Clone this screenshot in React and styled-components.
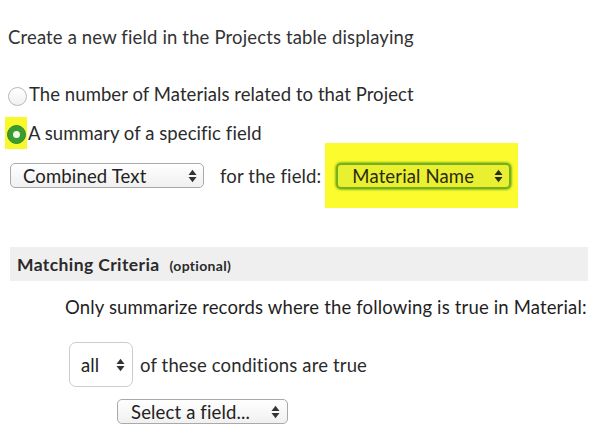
import React from 'react';
import styled, { createGlobalStyle } from 'styled-components';

const GlobalStyle = createGlobalStyle`
  html, body {
    margin: 0;
    padding: 0;
    background: #ffffff;
  }
  body {
    font-family: Lato, "Open Sans", "Liberation Sans", sans-serif;
    color: #333333;
    letter-spacing: 0.15px;
  }
`;

const Page = styled.div`
  width: 600px;
  height: 438px;
  overflow: hidden;
  box-sizing: border-box;
  padding: 26px 12px 0 8px;
`;

const Heading = styled.p`
  margin: 0;
  font-size: 18.5px;
  line-height: 22px;
  color: #333333;
`;

const RadioList = styled.div`
  margin-top: 35px;
  display: flex;
  flex-direction: column;
  gap: 17px;
`;

const RadioRow = styled.label`
  display: flex;
  align-items: center;
  height: 22px;
  font-size: 18.5px;
  line-height: 22px;
  letter-spacing: 0.07px;
  color: #2b2b2b;
`;

const Radio = styled.span`
  width: 19px;
  height: 19px;
  box-sizing: border-box;
  border-radius: 50%;
  flex: none;
  display: flex;
  align-items: center;
  justify-content: center;
  margin-top: ${(p) => (p.$checked ? '0' : '4px')};
  margin-right: 2px;
  border: 1px solid ${(p) => (p.$checked ? '#2f8a2c' : '#b8b8b8')};
  background: ${(p) =>
    p.$checked ? '#3a9b34' : 'linear-gradient(#ffffff, #f1f1f1)'};

  &::after {
    content: '';
    display: ${(p) => (p.$checked ? 'block' : 'none')};
    width: 7px;
    height: 7px;
    border-radius: 50%;
    background: #f4f8d8;
  }
`;

const Highlight = styled.span`
  display: flex;
  flex: none;
  padding: 8px 1px 5px 2px;
  margin-left: -3px;
  margin-right: 1px;
  background: #f8f82a;
  & > span {
    margin-right: 0;
  }
`;

const SelectRow = styled.div`
  display: flex;
  align-items: center;
  height: 25px;
  margin-top: 19px;
  margin-left: 2px;
  font-size: 18.5px;
  color: #2b2b2b;
`;

const Select = styled.div`
  display: flex;
  align-items: center;
  justify-content: space-between;
  box-sizing: border-box;
  flex: none;
  width: ${(p) => p.$width}px;
  height: ${(p) => p.$height || 25}px;
  padding: 0 ${(p) => p.$padRight || 6}px 0 ${(p) => p.$padLeft || 12}px;
  border: 1px solid #a9a9a9;
  border-radius: 5px;
  background: linear-gradient(#ffffff, #f0f0f0);
  font-size: 18.5px;
  line-height: 22px;
  color: #222222;
`;

const PlainSelect = styled(Select)`
  border-color: #cccccc;
  border-radius: 7px;
  background: #ffffff;
`;

const GreenSelect = styled(Select)`
  border: 2px solid #78b01c;
  box-shadow: 0 0 2px 1px #8fbf22;
  background: #e9ef31;
  color: #2b2b12;
`;

const YellowBox = styled.div`
  flex: none;
  margin: -20px 0 -19px 4px;
  padding: 20px 7px 19px 11px;
  background: #fbfb2d;
`;

const FieldLabel = styled.span`
  margin-left: 16px;
`;

const Section = styled.div`
  margin-top: 59px;
  margin-left: 2px;
  width: 578px;
  height: 34px;
  box-sizing: border-box;
  padding-left: 7px;
  display: flex;
  align-items: center;
  background: #efefef;
  color: #2a2a2a;
`;

const SectionTitle = styled.span`
  font-size: 17.5px;
  font-weight: 700;
  letter-spacing: 0.4px;
`;

const SectionNote = styled.span`
  font-size: 14px;
  font-weight: 700;
  letter-spacing: 0.3px;
  margin-left: 10px;
  margin-top: 2px;
`;

const Summary = styled.p`
  margin: 15px 0 0 57px;
  font-size: 18.5px;
  line-height: 22px;
  color: #1f1f1f;
`;

const ConditionRow = styled.div`
  display: flex;
  align-items: center;
  margin-top: 24px;
  margin-left: 61px;
  font-size: 18.5px;
  color: #2b2b2b;
`;

const ConditionText = styled.span`
  margin-left: 7px;
`;

const FieldRow = styled.div`
  display: flex;
  margin-top: 12px;
  margin-left: 109px;
`;

const Arrows = ({ color = '#333' }) => (
  <svg width="9" height="14" viewBox="0 0 9 14">
    <path d="M0.5 6 L4.5 0.8 L8.5 6 Z" fill={color} />
    <path d="M0.5 8 L4.5 13.2 L8.5 8 Z" fill={color} />
  </svg>
);

const App = () => (
  <>
    <GlobalStyle />
    <Page>
      <Heading>Create a new field in the Projects table displaying</Heading>

      <RadioList>
        <RadioRow>
          <Radio />
          The number of Materials related to that Project
        </RadioRow>
        <RadioRow>
          <Highlight>
            <Radio $checked />
          </Highlight>
          A summary of a specific field
        </RadioRow>
      </RadioList>

      <SelectRow>
        <Select $width={194}>
          <span>Combined Text</span>
          <Arrows />
        </Select>
        <FieldLabel>for the field:</FieldLabel>
        <YellowBox>
          <GreenSelect $width={175} $height={26} $padLeft={14} $padRight={6}>
            <span>Material Name</span>
            <Arrows color="#2b2b12" />
          </GreenSelect>
        </YellowBox>
      </SelectRow>

      <Section>
        <SectionTitle>Matching Criteria</SectionTitle>
        <SectionNote>(optional)</SectionNote>
      </Section>

      <Summary>Only summarize records where the following is true in Material:</Summary>

      <ConditionRow>
        <PlainSelect $width={64} $height={45} $padLeft={11} $padRight={7}>
          <span>all</span>
          <Arrows />
        </PlainSelect>
        <ConditionText>of these conditions are true</ConditionText>
      </ConditionRow>

      <FieldRow>
        <Select $width={171} $padLeft={13} $padRight={7}>
          <span>Select a field...</span>
          <Arrows />
        </Select>
      </FieldRow>
    </Page>
  </>
);

export default App;
